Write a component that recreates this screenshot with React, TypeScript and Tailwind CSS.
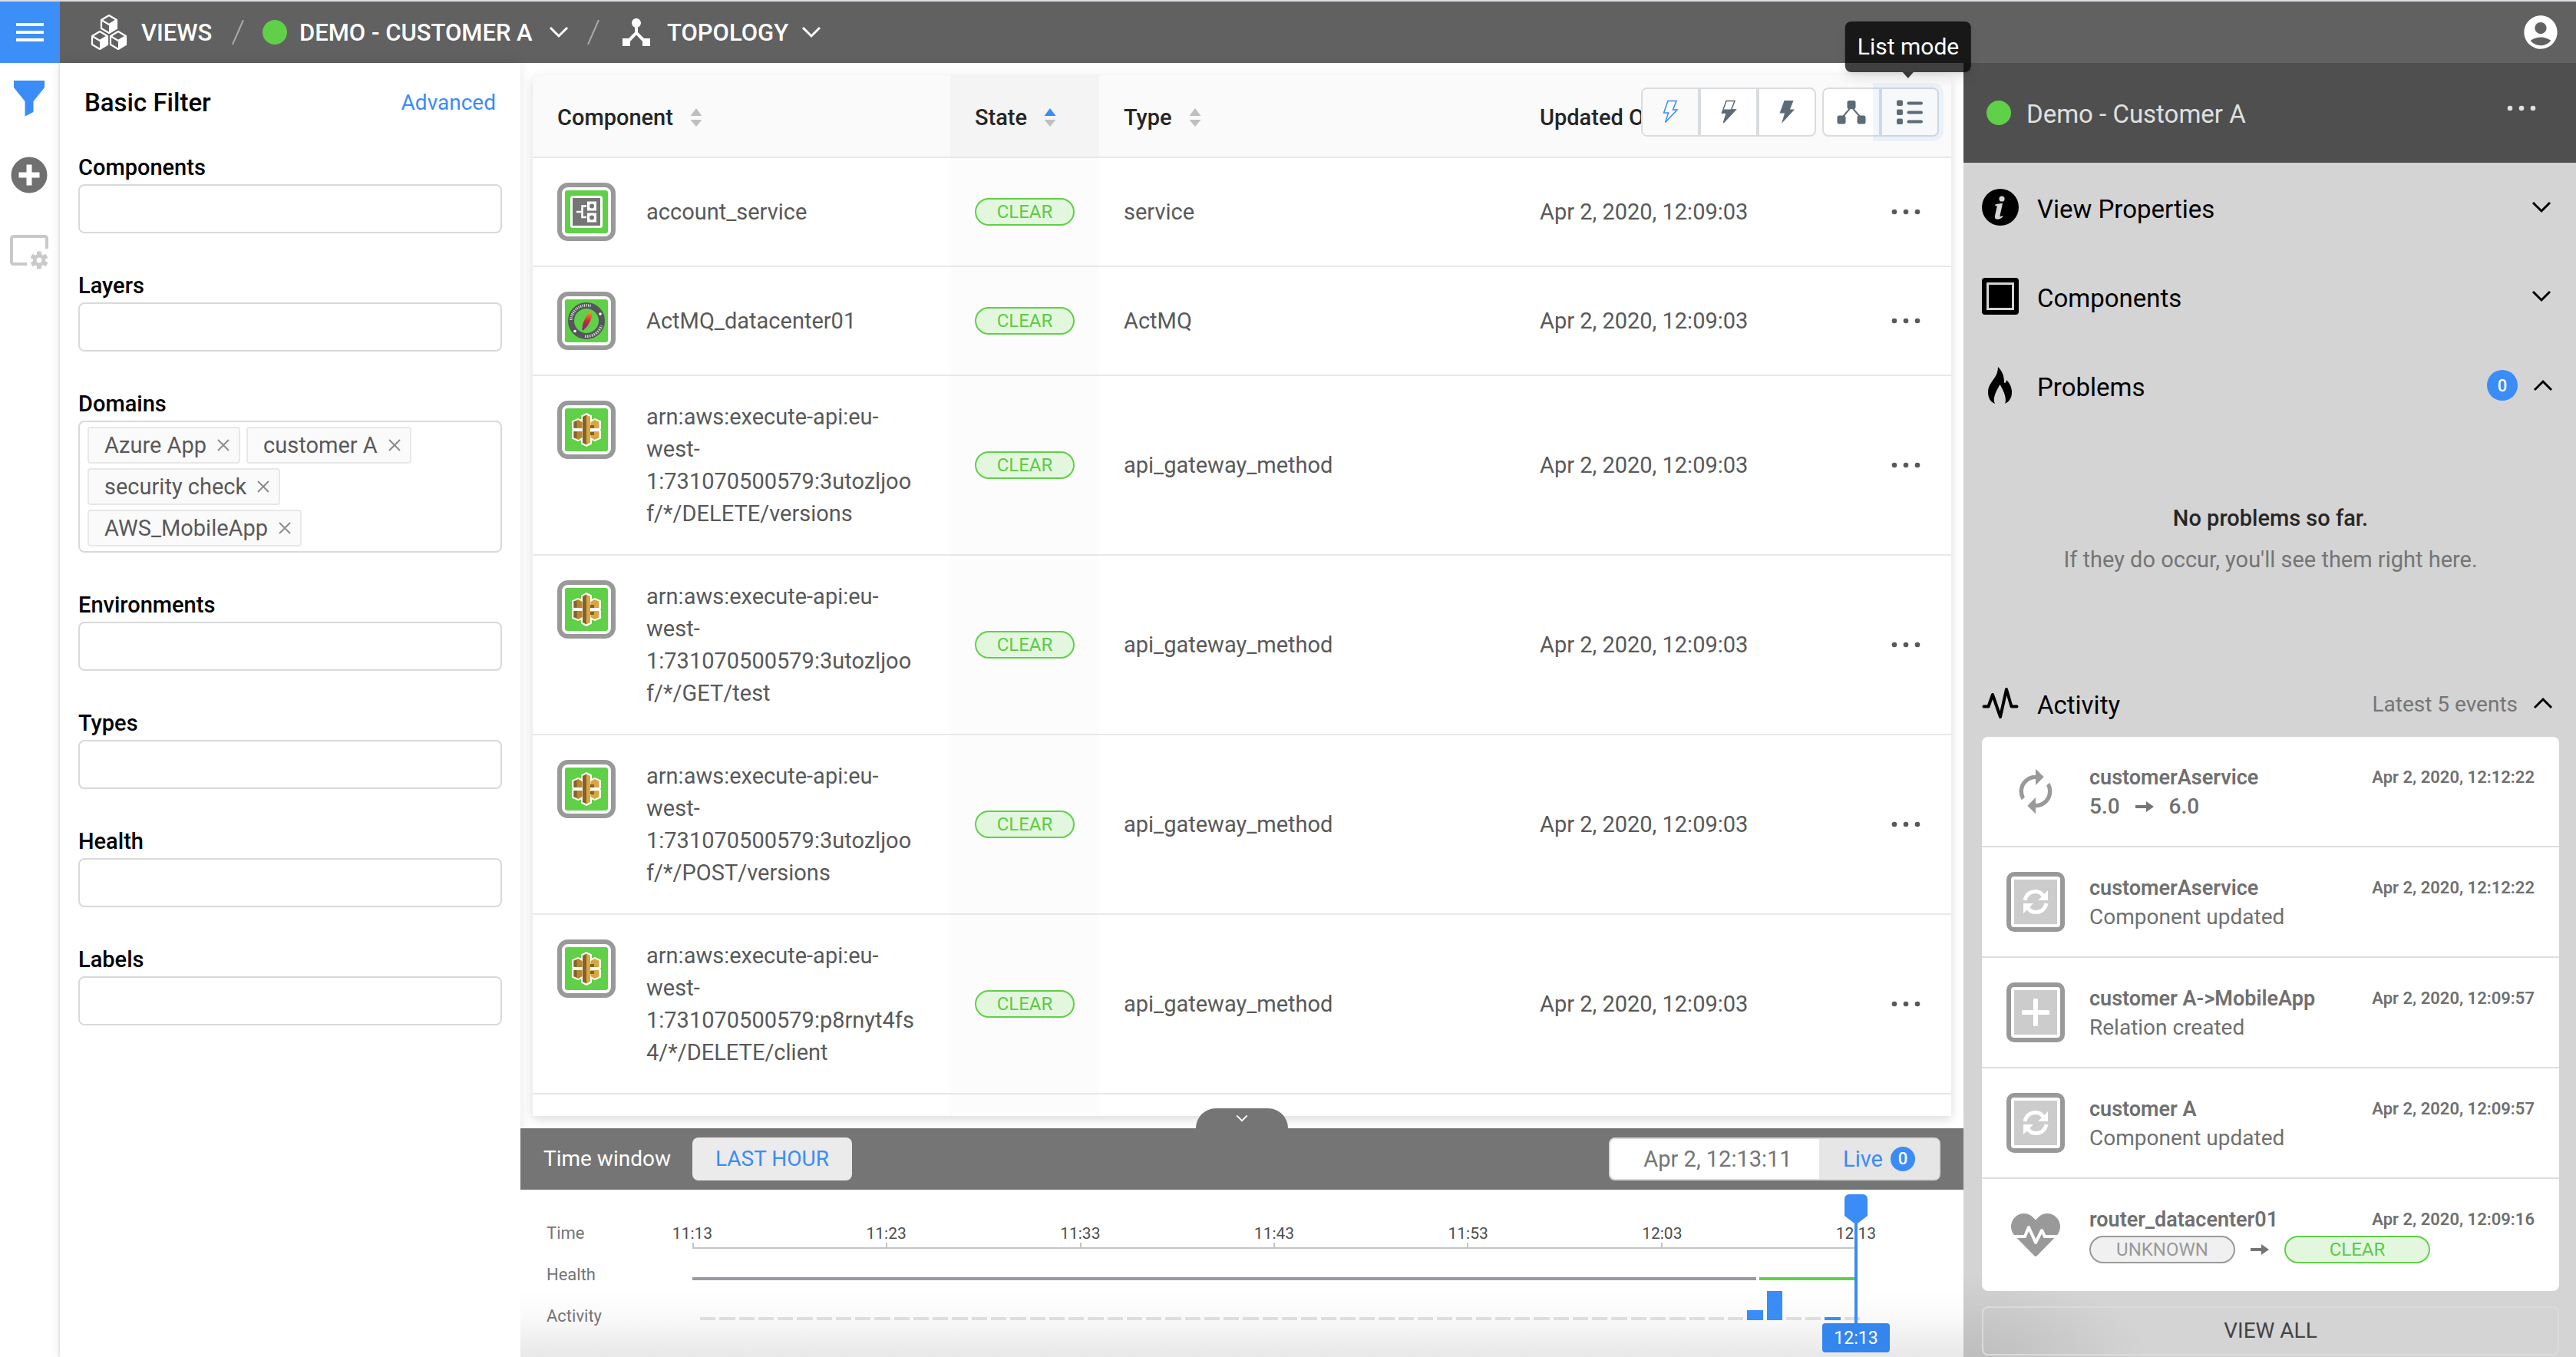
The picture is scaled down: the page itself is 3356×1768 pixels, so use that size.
import type { ReactNode } from "react";
import { MdAccountCircle, MdAutorenew, MdDeviceHub } from "react-icons/md";
import { FaHeartbeat } from "react-icons/fa";

type IconProps = { className?: string };

function Chevron({ className = "" }: IconProps) {
  return (
    <svg viewBox="0 0 26 16" fill="none" stroke="currentColor" strokeWidth="3" className={className}>
      <path d="M2 2l11 11L24 2" />
    </svg>
  );
}

function Cubes({ className = "" }: IconProps) {
  const cube = (x: number, y: number) => (
    <g transform={`translate(${x} ${y})`}>
      <path d="M12 1l10 6v11l-10 6-10-6V7z" fill="none" stroke="currentColor" strokeWidth="2.2" strokeLinejoin="round" />
      <path d="M2 7l10 6 10-6" fill="none" stroke="currentColor" strokeWidth="2.2" />
      <path d="M12 13l10-6v11l-10 6z" fill="currentColor" />
    </g>
  );
  return (
    <svg viewBox="0 0 48 46" className={className}>
      {cube(12, 0)}
      {cube(0, 21)}
      {cube(24, 21)}
    </svg>
  );
}

function Funnel() {
  return (
    <svg viewBox="0 0 48 48" className="h-12 w-12" fill="currentColor">
      <path d="M4 1h40v9L29.500 28v14L18.500 47.500V28L4 10z" />
    </svg>
  );
}

function PlusCircle() {
  return (
    <svg viewBox="0 0 48 48" className="h-12 w-12">
      <circle cx="24" cy="24" r="23.500" fill="currentColor" />
      <path d="M20.500 10.500h7v10h10v7h-10v10h-7v-10h-10v-7h10z" fill="#fff" />
    </svg>
  );
}

function BoardGear() {
  return (
    <svg viewBox="0 0 50 46" className="h-[46px] w-[50px]">
      <path
        d="M48 18V4.500A2.500 2.500 0 0 0 45.500 2h-41A2.500 2.500 0 0 0 2 4.500v31A2.500 2.500 0 0 0 4.500 38H22"
        fill="none"
        stroke="currentColor"
        strokeWidth="4"
      />
      <g fill="currentColor" transform="translate(38 33)">
        <circle r="8" />
        {[0, 60, 120, 180, 240, 300].map((a) => (
          <rect key={a} x="-3" y="-11.500" width="6" height="7" rx="1" transform={`rotate(${a})`} />
        ))}
      </g>
      <circle cx="38" cy="33" r="3.500" fill="#fff" />
    </svg>
  );
}

function Dots({ className = "" }: IconProps) {
  return (
    <svg viewBox="0 0 38 8" fill="currentColor" className={className}>
      <circle cx="4" cy="4" r="3.300" />
      <circle cx="19" cy="4" r="3.300" />
      <circle cx="34" cy="4" r="3.300" />
    </svg>
  );
}

function Sort({ active = false }: { active?: boolean }) {
  return (
    <svg viewBox="0 0 16 24" className="h-6 w-4">
      <path d="M8 0l7.500 10H.5z" fill={active ? "#3a8cf7" : "#bfbfbf"} />
      <path d="M8 24l7.500-9H.5z" fill="#bfbfbf" />
    </svg>
  );
}

function Bolt({ kind }: { kind: "outline" | "half" | "full" }) {
  return (
    <svg viewBox="0 0 24 32" className="h-8 w-6">
      {kind === "full" ? (
        <path d="M8.500 1h12l-4.500 11.500h6L5 31l4-13.500H2.500z" fill="currentColor" />
      ) : (
        <>
          <path d="M9 1.500h11L15.500 13H21L5.500 29.500l4-12.500H3.500z" fill="none" stroke="currentColor" strokeWidth="1.500" />
          {kind === "half" && <path d="M5.500 12.500H22L5 31l4-13.500H2.500z" fill="currentColor" />}
        </>
      )}
    </svg>
  );
}

function Nodes() {
  return (
    <svg viewBox="0 0 38 32" className="h-8 w-[38px]" fill="currentColor">
      <rect x="13.500" y="1" width="11" height="11" rx="2.500" />
      <rect x="0.500" y="20.500" width="11" height="11" rx="2.500" />
      <rect x="26.500" y="20.500" width="11" height="11" rx="2.500" />
      <path d="M8 22l11-13 11 13" fill="none" stroke="currentColor" strokeWidth="2" />
    </svg>
  );
}

function ListIcon() {
  return (
    <svg viewBox="0 0 36 32" className="h-8 w-9" fill="currentColor">
      {[0, 12, 24].map((y) => (
        <g key={y}>
          <rect x="1" y={y + 0.5} width="8" height="7.500" rx="2" />
          <rect x="14.500" y={y + 2.5} width="20.500" height="4" rx="2" />
        </g>
      ))}
    </svg>
  );
}

function ServiceArt() {
  return (
    <svg viewBox="0 0 56 56" className="h-14 w-14">
      <rect width="56" height="56" rx="3" fill="#60d048" />
      <rect x="8.500" y="8.500" width="39" height="39" rx="2" fill="#757575" stroke="#fff" strokeWidth="3" />
      <path d="M15 28h7M28 20.500h-5.500v14.500H28" fill="none" stroke="#fff" strokeWidth="2.500" />
      <rect x="29" y="14.500" width="12" height="12" fill="#fff" />
      <rect x="29" y="29.500" width="12" height="12" fill="#fff" />
      <circle cx="35" cy="20.500" r="3" fill="#757575" />
      <circle cx="35" cy="35.500" r="3" fill="#757575" />
    </svg>
  );
}

function ApacheArt() {
  return (
    <svg viewBox="0 0 56 56" className="h-14 w-14">
      <defs>
        <linearGradient id="feather" x1="0" y1="0" x2="0" y2="1">
          <stop offset="0" stopColor="#f79b2c" />
          <stop offset="0.500" stopColor="#d0273d" />
          <stop offset="1" stopColor="#6b2f86" />
        </linearGradient>
      </defs>
      <rect width="56" height="56" rx="3" fill="#60d048" />
      <circle cx="28" cy="28" r="20" fill="none" stroke="#54565b" strokeWidth="8" />
      <path
        d="M33.500 16c2.500 1 2 7-1 13-2 4.500-5 9-7 9.500l-1.500 2-2-1 1-3c-1-2 1-7 3.500-12 2.500-5 5-9 7-8.500z"
        fill="url(#feather)"
      />
      <circle cx="46" cy="19" r="1.800" fill="#fff" />
      <circle cx="13" cy="41.500" r="1.800" fill="#fff" />
      <g fill="none" stroke="#d8d8d8" strokeWidth="3.500">
        <path d="M7.800 27a20.200 20.200 0 0 1 27-18" strokeDasharray="1.200 1.300" />
        <path d="M26 48.200a20.200 20.200 0 0 0 21.500-14" strokeDasharray="1.500 1.500" />
      </g>
    </svg>
  );
}

function GatewayArt() {
  return (
    <svg viewBox="0 0 56 56" className="h-14 w-14">
      <rect width="56" height="56" rx="3" fill="#60d048" />
      <path
        d="M28 6l7 3.500v5l4-1.500 8 3.500v10l-1 1.500 1 1.500v10L39 43l-4-1.500v5L28 50l-7-3.500v-5L17 43l-8-3.500v-10l1-1.500-1-1.500v-10L17 13l4 1.500v-5z"
        fill="#fff"
      />
      <path d="M11.500 17.500l6-2.500 5 3v8h-11zM11.500 30h11v8l-5 3-6-2.500z" fill="#b5852f" />
      <path d="M11.500 17.500l4-1v9h-4zM11.500 30h4v9l-4-1z" fill="#876125" />
      <path d="M44.500 17.500l-6-2.500-5 3v8h11zM44.500 30h-11v8l5 3 6-2.500z" fill="#d9a741" />
      <path d="M33 22h5v4h-5zM33 31h5v4h-5z" fill="#876125" />
      <path d="M28 8.500l-5 2.500v34l5 2.500z" fill="#876125" />
      <path d="M28 8.500l5 2.500v34l-5 2.500z" fill="#d9a741" />
    </svg>
  );
}

function SyncArt() {
  return (
    <svg viewBox="0 0 34 34" className="h-[34px] w-[34px]">
      <g fill="none" stroke="#fff" strokeWidth="5">
        <path d="M3 15C5 6 12 3 18 3.500c5 .5 8 3.500 10 7" />
        <path d="M31 19c-2 9-9 12-15 11.500-5-.5-8-3.500-10-7" />
      </g>
      <path d="M33 2v13H20zM1 32V19h13z" fill="#fff" />
    </svg>
  );
}

function PlusArt() {
  return (
    <svg viewBox="0 0 36 36" className="h-9 w-9">
      <path d="M18 2v32M2 18h32" stroke="#fff" strokeWidth="6" strokeLinecap="round" />
    </svg>
  );
}

function InfoIcon() {
  return (
    <svg viewBox="0 0 48 48" className="h-12 w-12">
      <circle cx="24" cy="24" r="24" />
      <circle cx="26" cy="13" r="3.600" fill="#d4d4d4" />
      <path
        d="M17.500 20.500c3-1 6.500-1.500 9.500-1.500l-3.500 16c-.3 1.500.8 1.600 3.500 0l.5 1.500c-3 2.500-5 3.200-7 3.200-3 0-4.200-1.700-3.500-4.700l2.800-12.500-2.600-.5z"
        fill="#d4d4d4"
      />
    </svg>
  );
}

function SquareIcon() {
  return (
    <svg viewBox="0 0 48 48" className="h-12 w-12">
      <rect width="48" height="48" rx="4" />
      <rect x="7.500" y="7.500" width="33" height="33" fill="none" stroke="#d4d4d4" strokeWidth="3" />
    </svg>
  );
}

function FlameIcon() {
  return (
    <svg viewBox="0 0 48 48" className="h-12 w-12">
      <path d="M21 0c5 5 8 11 8 20 0 2 3 1 3-3 4 4 7 9 7 16 0 7-3 12-9 15 2-4 1-13-6.500-25C20 30 13 40 17 48 11 46 8 40 8 33c0-8 4-12 8-18 3-4 5-9 5-15z" />
    </svg>
  );
}

function PulseIcon() {
  return (
    <svg viewBox="0 0 48 42" className="h-[42px] w-12" fill="none" stroke="currentColor" strokeWidth="4" strokeLinecap="round" strokeLinejoin="round">
      <path d="M2.500 25.500h6L14 10l10 29 8-36 6.500 22.500h7" />
    </svg>
  );
}

function Arrow() {
  return (
    <svg viewBox="0 0 24 14" className="h-[14px] w-6">
      <path d="M0 5h14V0l10 7-10 7V9H0z" fill="#757575" />
    </svg>
  );
}

const pill = "flex h-9 items-center justify-center rounded-full border-2 text-[24px] leading-none";
const clear = "border-[#60d048] bg-[#e3f7df] text-[#5ccb46]";

function Field({ label, children }: { label: string; children?: ReactNode }) {
  const id = `filter-${label.toLowerCase()}`;
  return (
    <div className="pb-12">
      <label htmlFor={id} className="block pt-0.5 pb-1 text-[29px] leading-9 font-medium text-black">
        {label}
      </label>
      {children ?? <input id={id} className="block h-16 w-full rounded-lg border-2 border-[#d9d9d9] bg-white px-4 text-[28px]" />}
    </div>
  );
}

function Tag({ children }: { children: string }) {
  return (
    <span className="flex h-12 items-center rounded border-2 border-[#e8e8e8] bg-[#fafafa] pr-3 pl-5 text-[29px] leading-none text-[#595959]">
      {children}
      <button aria-label={`Remove ${children}`} className="ml-3.5">
        <svg viewBox="0 0 16 16" className="h-4 w-4" stroke="#8c8c8c" strokeWidth="2">
          <path d="M1 1l14 14M15 1L1 15" />
        </svg>
      </button>
    </span>
  );
}

const rows = [
  { name: "account_service", type: "service", art: "service" },
  { name: "ActMQ_datacenter01", type: "ActMQ", art: "apache" },
  { name: "arn:aws:execute-api:eu-west-1:731070500579:3utozljoof/*/DELETE/versions", type: "api_gateway_method", art: "gateway" },
  { name: "arn:aws:execute-api:eu-west-1:731070500579:3utozljoof/*/GET/test", type: "api_gateway_method", art: "gateway" },
  { name: "arn:aws:execute-api:eu-west-1:731070500579:3utozljoof/*/POST/versions", type: "api_gateway_method", art: "gateway" },
  { name: "arn:aws:execute-api:eu-west-1:731070500579:p8rnyt4fs4/*/DELETE/client", type: "api_gateway_method", art: "gateway" },
];

function ComponentTable() {
  const th = "border-b-2 border-[#e8e8e8] bg-[#fafafa] px-8 pt-1 text-left font-medium text-[#262626]";
  const td = "border-b-2 border-[#e8e8e8] px-8";
  return (
    <table className="h-full w-full table-fixed border-separate border-spacing-0 text-[29px] leading-[42px] text-[#595959]">
      <colgroup>
        <col className="w-[544px]" />
        <col className="w-[194px]" />
        <col />
        <col className="w-[458px]" />
        <col className="w-[110px]" />
      </colgroup>
      <thead>
        <tr className="h-[108px]">
          <th className={th}>
            <button className="flex items-center gap-[22px]">Component <Sort /></button>
          </th>
          <th className="border-b-2 border-[#e8e8e8] bg-[#f4f4f4] px-8 pt-1 text-left font-medium text-[#262626]">
            <button className="flex items-center gap-[22px]">State <Sort active /></button>
          </th>
          <th className={th}>
            <button className="flex items-center gap-[22px]">Type <Sort /></button>
          </th>
          <th className={th}>Updated On</th>
          <th className={th} aria-label="Actions" />
        </tr>
      </thead>
      <tbody>
        {rows.map((r) => (
          <tr key={r.name}>
            <td className="border-b-2 border-[#e8e8e8] py-8 pl-8">
              <div className="flex items-start gap-10">
                <span className="flex h-[76px] w-[76px] shrink-0 items-center justify-center rounded-[14px] border-6 border-[#999]">
                  {r.art === "service" ? <ServiceArt /> : r.art === "apache" ? <ApacheArt /> : <GatewayArt />}
                </span>
                <a href="#component" className="w-[352px] self-center break-words">{r.name}</a>
              </div>
            </td>
            <td className="border-b-2 border-[#e8e8e8] bg-[#fcfcfc] px-8">
              <span className={`${pill} ${clear} w-[130px]`}>CLEAR</span>
            </td>
            <td className={td}>{r.type}</td>
            <td className={td}>Apr 2, 2020, 12:09:03</td>
            <td className={td}>
              <button aria-label="More actions" className="block"><Dots className="h-2 w-[38px]" /></button>
            </td>
          </tr>
        ))}
        <tr className="h-7">
          <td />
          <td className="bg-[#fcfcfc]" />
          <td />
          <td />
          <td />
        </tr>
      </tbody>
    </table>
  );
}

function Toolbar() {
  return (
    <div className="absolute top-8 right-8 flex gap-2 text-[#5c6b77]">
      <div className="flex h-16 overflow-hidden rounded-lg border-2 border-[#d9dcdf] bg-white">
        <button aria-label="No propagation" className="flex w-[72px] items-center justify-center bg-[#fafafa] text-[#3a8cf7]"><Bolt kind="outline" /></button>
        <button aria-label="Auto propagation" className="flex w-20 items-center justify-center border-x-4 border-[#d9dcdf]"><Bolt kind="half" /></button>
        <button aria-label="Full propagation" className="flex w-[72px] items-center justify-center"><Bolt kind="full" /></button>
      </div>
      <div className="flex h-16 rounded-lg border-2 border-[#d9dcdf] bg-white">
        <button aria-label="Graph mode" className="flex w-[72px] items-center justify-center"><Nodes /></button>
        <div className="relative">
          <button aria-label="List mode" aria-describedby="list-tip" className="flex h-[60px] w-[76px] items-center justify-center rounded-r-md border-l-4 border-[#cdd9ea] bg-[#f7f8f9] ring-8 ring-[#3a8cf7]/8">
            <ListIcon />
          </button>
          <div id="list-tip" role="tooltip" className="absolute bottom-[82px] left-1/2 flex h-[66px] -translate-x-1/2 items-center rounded-lg bg-black/75 px-4 text-[30px] leading-none whitespace-nowrap text-white shadow-lg">
            List mode
            <svg viewBox="0 0 16 8" className="absolute top-full left-1/2 h-2 w-4 -translate-x-1/2">
              <path d="M1 0h14L8 8z" fillOpacity="0.750" />
            </svg>
          </div>
        </div>
      </div>
    </div>
  );
}

const ticks = ["11:13", "11:23", "11:33", "11:43", "11:53", "12:03", "12:13"];
const buckets = Array.from({ length: 60 }, (_, i) => i);

function bucketClass(i: number) {
  if (i === 54) return "h-[13px] bg-[#3a8cf7]";
  if (i === 55) return "h-[38px] bg-[#3a8cf7]";
  if (i === 58) return "h-1 bg-[#3a8cf7]";
  return "h-1 bg-[#dedede]";
}

function Timeline() {
  return (
    <section className="relative z-10 shrink-0">
      <button aria-label="Collapse timeline" className="absolute bottom-full left-1/2 flex h-[26px] w-[120px] -translate-x-1/2 items-center justify-center rounded-t-[26px] bg-[#757575] text-white">
        <Chevron className="h-2.5 w-4" />
      </button>
      <div className="flex h-20 items-center bg-[#757575] pr-[30px] pl-[30px] text-[28px] leading-none text-white">
        <span>Time window</span>
        <button className="ml-7 h-14 rounded-lg bg-[#ebebeb] px-[30px] text-[#3a8cf7]">LAST HOUR</button>
        <div className="ml-auto flex h-14 overflow-hidden rounded-lg border-2 border-[#d9d9d9] bg-white text-[29px] text-[#757575]">
          <button className="w-[272px] pl-2">Apr 2, 12:13:11</button>
          <button className="flex w-[156px] items-center justify-center gap-2.5 bg-[#e6e6e6] text-[#3a8cf7]">
            Live
            <span className="flex h-8 w-8 items-center justify-center rounded-full bg-[#3a8cf7] text-[22px] font-medium text-white">0</span>
          </button>
        </div>
      </div>
      <div className="flex h-[218px] bg-[linear-gradient(to_bottom,#fff_60%,#fafafa_75%,#e8e8e8)] pt-8 pr-[140px] pl-[34px] text-[22px] text-[#757575]">
        <div className="flex w-[190px] flex-col leading-[54px]">
          <span className="-mt-0.5">Time</span>
          <span>Health</span>
          <span>Activity</span>
        </div>
        <div className="relative flex-1 pt-1">
          <div className="flex h-[33px] items-end justify-between text-[21px] leading-6 text-[#4d4d4d]">
            {ticks.map((t) => (
              <span key={t} className="flex w-0 justify-center">{t}</span>
            ))}
          </div>
          <div className="flex h-2 justify-between border-b-2 border-[#c4c4c4]">
            {ticks.map((t) => (
              <span key={t} className="w-0.5 bg-[#c4c4c4]" />
            ))}
          </div>
          <div className="mt-[37px] flex h-1 gap-1">
            <span className="flex-[1383] bg-[#959aa0]" />
            <span className="flex-[126] bg-[#60d048]" />
          </div>
          <div className="-mr-[5px] ml-2.5 flex h-[52px] items-end gap-[5px]">
            {buckets.map((i) => (
              <span key={i} className={`flex-1 ${bucketClass(i)}`} />
            ))}
          </div>
          <div className="absolute -top-[26px] right-0 flex w-0 flex-col items-center">
            <svg viewBox="0 0 30 38" className="h-[38px] w-[30px] shrink-0" fill="#3a8cf7">
              <path d="M6 0h18a6 6 0 0 1 6 6v22L17 38h-4L0 28V6a6 6 0 0 1 6-6z" />
            </svg>
            <span className="h-[130px] w-1 bg-[#3a8cf7]" />
            <span className="flex h-[38px] w-[88px] items-center justify-center rounded bg-[#3486ee] text-[23px] leading-none text-white">12:13</span>
          </div>
        </div>
      </div>
    </section>
  );
}

function Section({ icon, title, open = false, children }: { icon: ReactNode; title: string; open?: boolean; children?: ReactNode }) {
  return (
    <button className="flex h-[116px] w-full items-center text-left text-black" aria-expanded={open}>
      {icon}
      <span className="ml-6 flex-1 pt-1 text-[33px] leading-none">{title}</span>
      {children}
      <Chevron className={open ? "mr-2 h-4 w-[26px] rotate-180" : "mr-2.5 h-4 w-[26px]"} />
    </button>
  );
}

function Framed({ children }: { children: ReactNode }) {
  return (
    <span className="flex h-[78px] w-[76px] rounded-[10px] border-6 border-[#999] bg-white p-1">
      <span className="flex flex-1 items-center justify-center bg-[#ccc]">{children}</span>
    </span>
  );
}

function Event({ icon, title, time, children }: { icon: ReactNode; title: string; time: string; children: ReactNode }) {
  return (
    <li className="flex h-36 items-center border-b-2 border-[#dedede] pr-8 pl-8 last:h-[146px] last:border-b-0">
      <span className="flex w-[76px] shrink-0 justify-center">{icon}</span>
      <div className="ml-8 min-w-0 flex-1 self-start pt-[34px]">
        <div className="flex items-center justify-between">
          <span className="text-[27px] leading-[38px] font-semibold">{title}</span>
          <time className="text-[22px] leading-[38px] font-semibold">{time}</time>
        </div>
        <div className="text-[28px] leading-[38px]">{children}</div>
      </div>
    </li>
  );
}

export default function App() {
  return (
    <div className="flex h-screen min-h-[1768px] flex-col overflow-hidden border-t-2 border-[#dcdbe2] bg-white font-[Roboto,sans-serif] text-[#595959]">
      <header className="flex h-20 shrink-0 items-center bg-[#616161] text-[31px] leading-none font-medium text-white">
        <button aria-label="Menu" className="flex h-20 w-[78px] flex-col items-center justify-center gap-1.5 bg-[#3d8ff8]">
          <span className="h-1 w-9 bg-white" />
          <span className="h-1 w-9 bg-white" />
          <span className="h-1 w-9 bg-white" />
        </button>
        <nav className="flex flex-1 items-center">
          <a href="#views" className="ml-10 flex w-[184px] items-center gap-[18px]">
            <Cubes className="h-[46px] w-12" />
            VIEWS
          </a>
          <svg viewBox="0 0 16 32" className="h-8 w-4" stroke="#aaa" strokeWidth="2"><path d="M15 0L1 32" /></svg>
          <button className="ml-6 flex w-[399px] items-center">
            <span className="h-8 w-8 rounded-full bg-[#60d048]" />
            <span className="ml-4">DEMO - CUSTOMER A</span>
            <Chevron className="ml-auto h-4 w-[26px]" />
          </button>
          <svg viewBox="0 0 16 32" className="ml-6 h-8 w-4" stroke="#aaa" strokeWidth="2"><path d="M15 0L1 32" /></svg>
          <button className="ml-6 flex w-[265px] items-center">
            <MdDeviceHub className="h-12 w-12" />
            <span className="ml-4">TOPOLOGY</span>
            <Chevron className="ml-auto h-4 w-[26px]" />
          </button>
        </nav>
        <button aria-label="Account" className="mr-5">
          <MdAccountCircle className="h-[52px] w-[52px]" />
        </button>
      </header>

      <div className="flex min-h-0 flex-1">
        <nav className="flex w-[78px] shrink-0 flex-col items-center border-r-2 border-[#f2f2f2] pt-[22px]">
          <button aria-label="Filter" className="text-[#3a8cf7]"><Funnel /></button>
          <button aria-label="Add" className="mt-[52px] text-[#707070]"><PlusCircle /></button>
          <button aria-label="View settings" className="mt-[54px] text-[#c9c9c9]"><BoardGear /></button>
        </nav>

        <aside className="w-[600px] shrink-0 px-6 pt-[34px] shadow-[0_0_14px_rgba(0,0,0,0.1)]">
          <div className="flex items-center justify-between pr-2 pb-[46px] pl-2 leading-9">
            <h2 className="text-[33px] font-medium text-black">Basic Filter</h2>
            <a href="#advanced" className="text-[28px] text-[#3a8cf7]">Advanced</a>
          </div>
          <Field label="Components" />
          <Field label="Layers" />
          <Field label="Domains">
            <div className="flex flex-wrap gap-x-2 gap-y-1.5 rounded-lg border-2 border-[#d9d9d9] px-2.5 py-1.5">
              <Tag>Azure App</Tag>
              <Tag>customer A</Tag>
              <Tag>security check</Tag>
              <input id="filter-domains" className="h-12 w-20 outline-none" />
              <Tag>AWS_MobileApp</Tag>
            </div>
          </Field>
          <Field label="Environments" />
          <Field label="Types" />
          <Field label="Health" />
          <Field label="Labels" />
        </aside>

        <main className="relative z-20 flex min-w-0 flex-1 flex-col">
          <div className="min-h-0 flex-1 px-4 pt-4 pb-4">
            <div className="h-full overflow-hidden rounded-t-lg bg-white shadow-[0_4px_14px_rgba(0,0,0,0.15)]">
              <ComponentTable />
            </div>
          </div>
          <Toolbar />
          <Timeline />
        </main>

        <aside className="w-[798px] shrink-0 bg-[#d4d4d4] bg-[radial-gradient(ellipse_240px_110px_at_0_100%,#bdbdbd,#d4d4d4)]">
          <div className="flex h-[130px] items-center bg-[#4f4f4f] pr-[52px] pl-[30px] text-[#e0e0e0]">
            <span className="h-8 w-8 rounded-full bg-[#60d048]" />
            <h2 className="ml-5 flex-1 pt-0.5 text-[33px] leading-none">Demo - Customer A</h2>
            <button aria-label="View actions" className="mb-3"><Dots className="h-2 w-[38px]" /></button>
          </div>
          <div className="px-6 pr-[22px]">
            <Section icon={<InfoIcon />} title="View Properties" />
            <Section icon={<SquareIcon />} title="Components" />
            <Section icon={<FlameIcon />} title="Problems" open>
              <span className="mr-5 flex h-10 w-10 items-center justify-center rounded-full bg-[#3a8cf7] text-[22px] font-medium text-white">0</span>
            </Section>
            <div className="flex h-[300px] flex-col items-center pt-[88px] text-[29px] leading-[54px]">
              <p className="font-medium text-[#262626]">No problems so far.</p>
              <p className="text-[#757575]">If they do occur, you'll see them right here.</p>
            </div>
            <button className="flex h-[100px] w-full items-center pt-3 text-left text-black" aria-expanded>
              <PulseIcon />
              <span className="ml-6 flex-1 pt-1 text-[33px] leading-none">Activity</span>
              <span className="mr-5 pt-1 text-[28px] leading-none text-[#757575]">Latest 5 events</span>
              <Chevron className="mr-2 h-4 w-[26px] rotate-180" />
            </button>
            <ul className="rounded-lg bg-white text-[#707070]">
              <Event icon={<MdAutorenew className="h-[64px] w-[64px] text-[#999]" />} title="customerAservice" time="Apr 2, 2020, 12:12:22">
                <span className="flex items-center gap-5 font-medium">5.0 <Arrow /> 6.0</span>
              </Event>
              <Event icon={<Framed><SyncArt /></Framed>} title="customerAservice" time="Apr 2, 2020, 12:12:22">Component updated</Event>
              <Event icon={<Framed><PlusArt /></Framed>} title="customer A->MobileApp" time="Apr 2, 2020, 12:09:57">Relation created</Event>
              <Event icon={<Framed><SyncArt /></Framed>} title="customer A" time="Apr 2, 2020, 12:09:57">Component updated</Event>
              <Event icon={<FaHeartbeat className="h-16 w-16 text-[#999]" />} title="router_datacenter01" time="Apr 2, 2020, 12:09:16">
                <span className="flex items-center gap-5 pt-0.5">
                  <span className={`${pill} w-[190px] border-[#999] bg-[#f0f0f0] text-[#999]`}>UNKNOWN</span>
                  <Arrow />
                  <span className={`${pill} ${clear} w-[190px]`}>CLEAR</span>
                </span>
              </Event>
            </ul>
            <button className="mt-5 h-16 w-full rounded-lg border-2 border-[#dadada] text-[28px] leading-none text-[#444]">VIEW ALL</button>
          </div>
        </aside>
      </div>
    </div>
  );
}
